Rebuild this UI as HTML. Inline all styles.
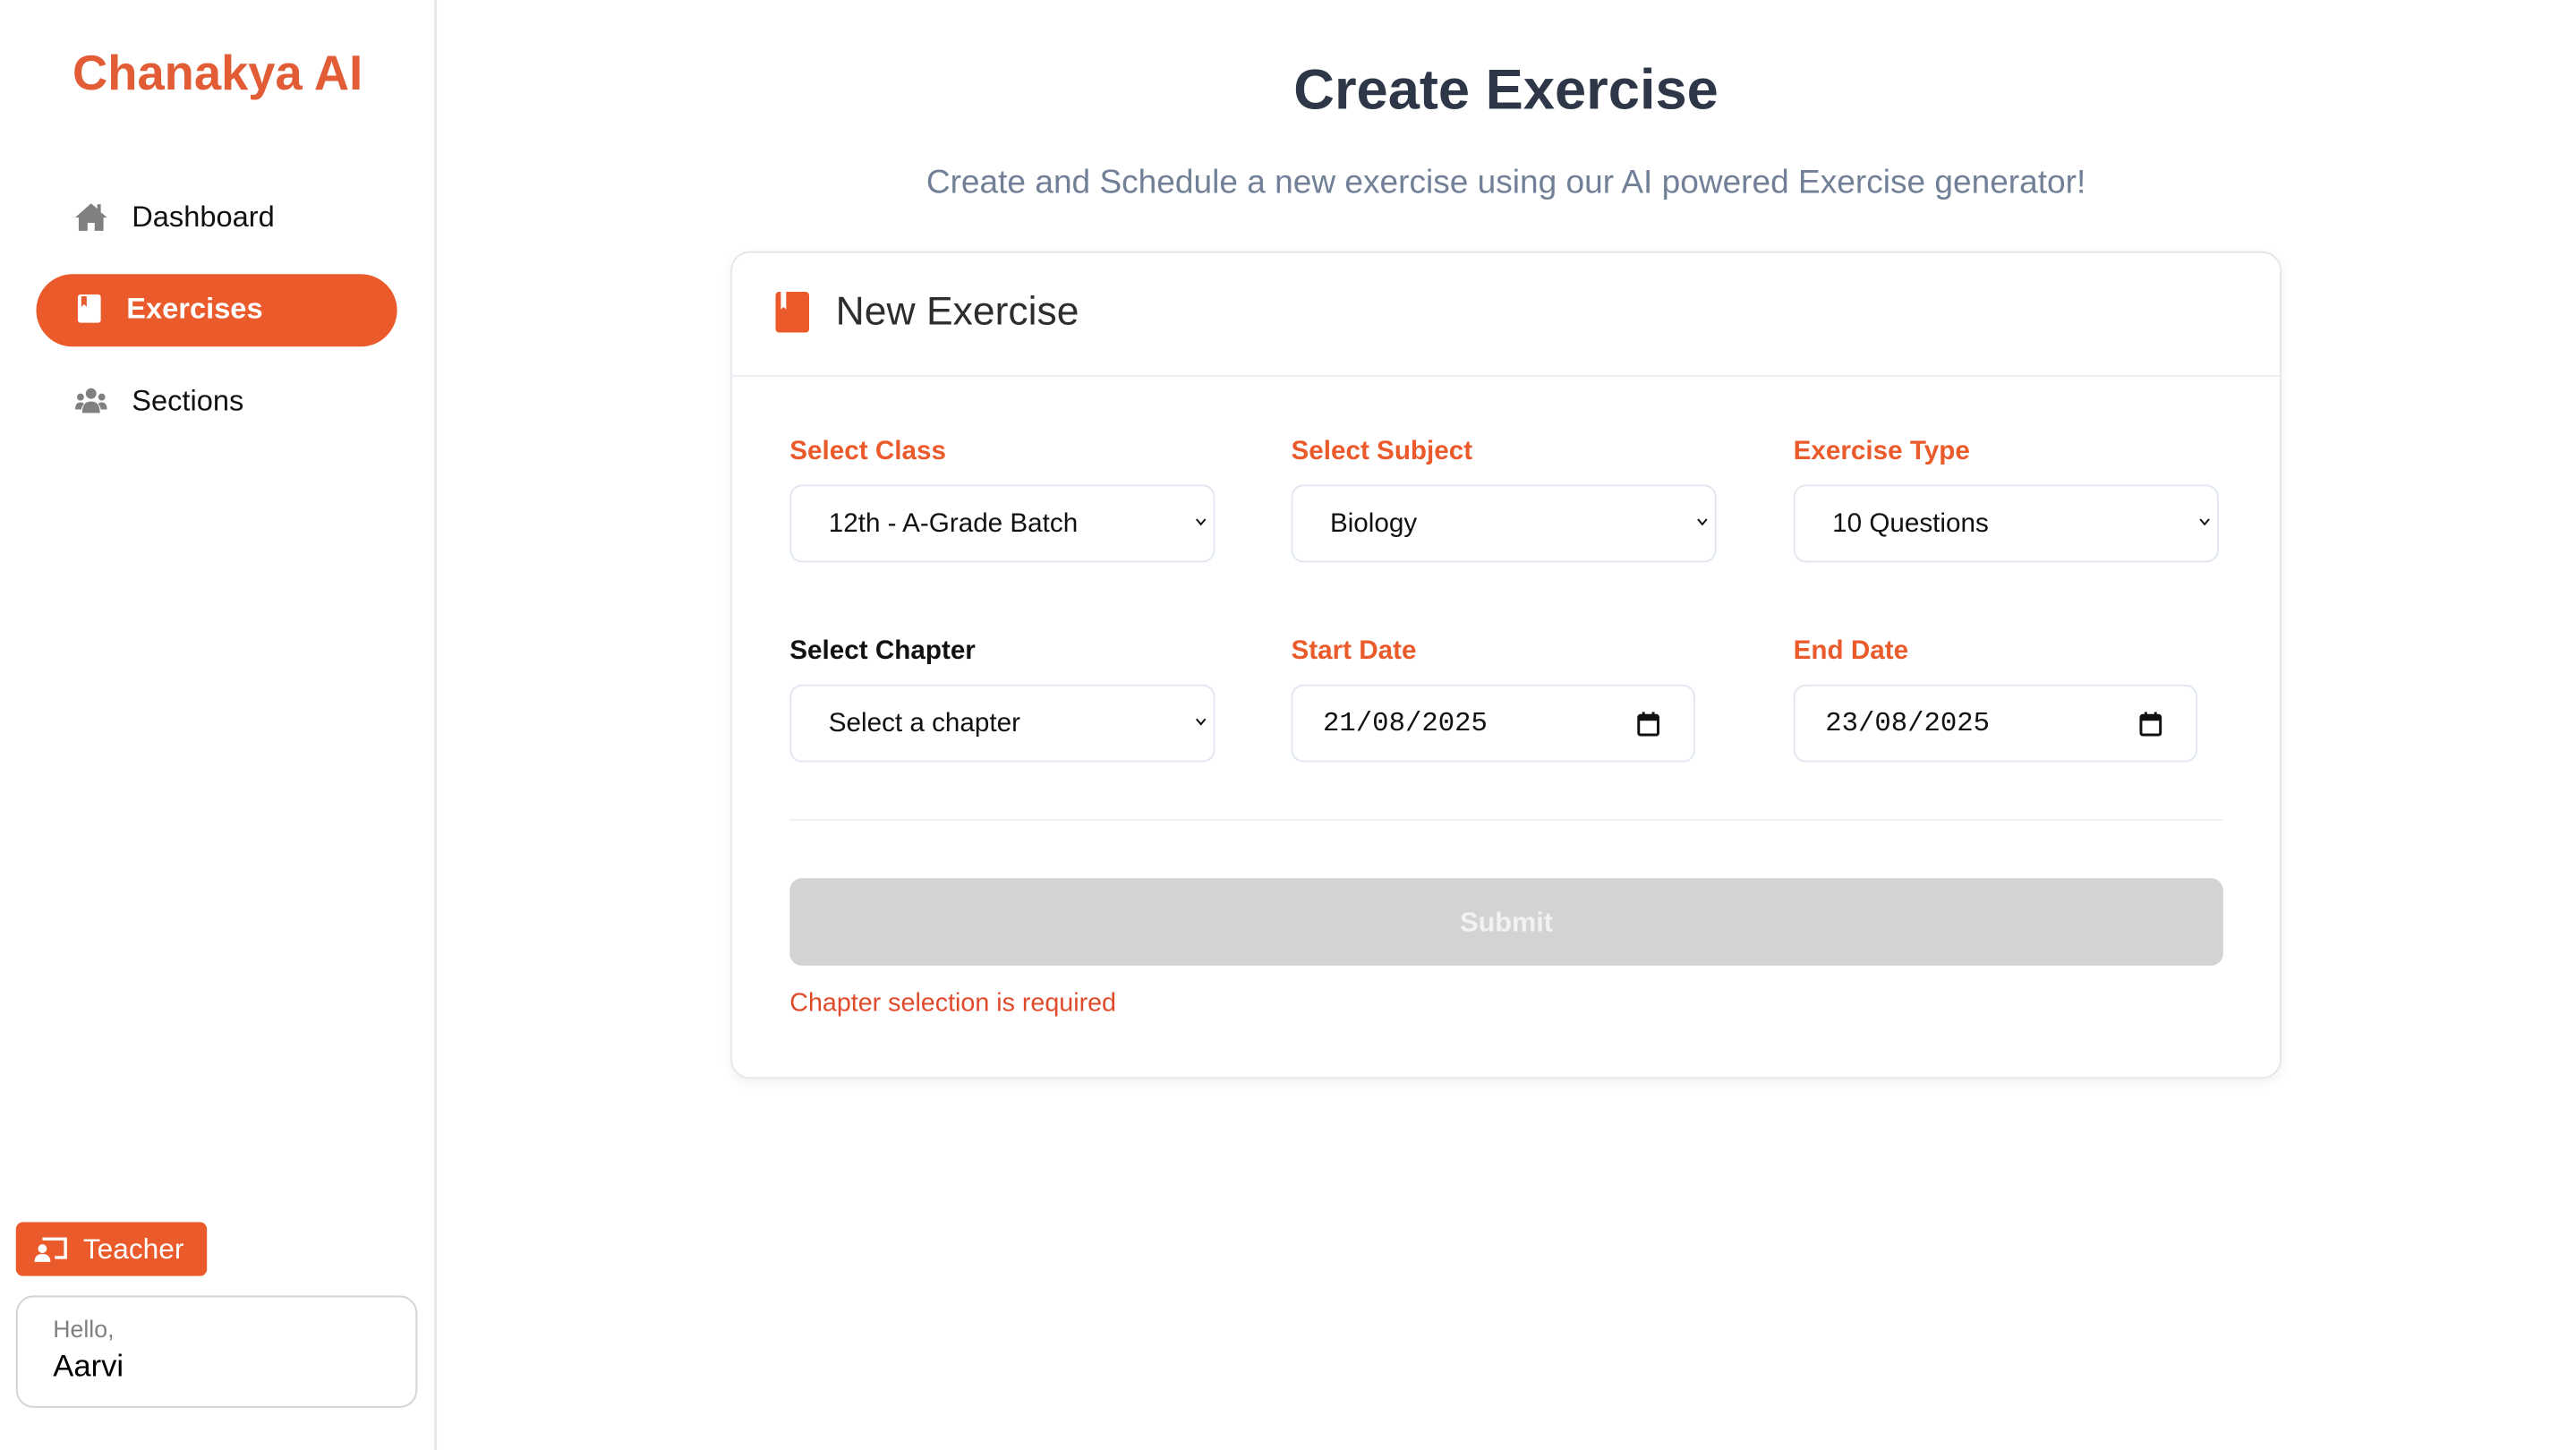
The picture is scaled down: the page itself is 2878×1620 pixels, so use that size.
<!DOCTYPE html>
<html><head><meta charset="utf-8"><style>
*{box-sizing:border-box;margin:0;padding:0}
body{width:2878px;height:1618px;background:#fff;font-family:"Liberation Sans",sans-serif;position:relative;overflow:hidden;color:#111}
#w{position:absolute;left:0;top:0;width:2913px;height:1638px;transform:scale(0.988);transform-origin:0 0}
.abs{position:absolute}
.side{left:0;top:0;width:494px;height:1640px;border-right:3px solid #e5e7eb}
.logo{left:82px;top:50px;font-size:55px;font-weight:bold;color:#e25c35;letter-spacing:0px}
.nav{left:83px;font-size:33px;display:flex;align-items:center;gap:26px}
.pill{left:41px;top:310px;width:408px;height:82px;border-radius:41px;background:#ea5a2b}
.lbl{font-size:30px;font-weight:bold;color:#ea5a2b}
.fld{height:88px;border:2px solid #e2e8f0;border-radius:14px;background:#fff;font-size:30px;display:flex;align-items:center;padding-left:42px;color:#111}
.chev{position:absolute;right:10px;top:30px}
.mono{font-family:"Liberation Mono",monospace;font-size:31px;padding-left:34px}
</style></head><body><div id="w">
<div class="abs side"></div>
<div class="abs logo">Chanakya AI</div>
<div class="abs nav" style="top:226px"><svg width="40" height="34" viewBox="0 0 40 34"><path d="M20 2 L2 18 L6 18 L6 33 L16 33 L16 24 L24 24 L24 33 L34 33 L34 18 L38 18 L31 12 L31 3 L27 3 L27 8Z" fill="#808080"/></svg><span>Dashboard</span></div>
<div class="abs pill"></div>
<div class="abs nav" style="top:330px;color:#fff;font-weight:bold"><svg width="34" height="34" viewBox="0 0 34 34"><rect x="5" y="1" width="26" height="32" rx="3" fill="#fff"/><path d="M9 3 L9 15 L12 12 L15 15 L15 3Z" fill="#ea5a2b"/></svg><span>Exercises</span></div>
<div class="abs nav" style="top:434px"><svg width="40" height="32" viewBox="0 0 40 32"><circle cx="20" cy="8" r="6" fill="#808080"/><circle cx="8" cy="12" r="4" fill="#808080"/><circle cx="32" cy="12" r="4" fill="#808080"/><path d="M10 30 Q10 17 20 17 Q30 17 30 30Z" fill="#808080"/><path d="M2 26 Q2 18 8 18 Q11 18 12 20 Q9 23 9 26Z" fill="#808080"/><path d="M38 26 Q38 18 32 18 Q29 18 28 20 Q31 23 31 26Z" fill="#808080"/></svg><span>Sections</span></div>
<div class="abs" style="left:18px;top:1382px;width:216px;height:61px;background:#ea5a2b;border-radius:8px;color:#fff;font-size:32px;display:flex;align-items:center;padding-left:20px;gap:18px"><svg width="38" height="30" viewBox="0 0 38 30"><path d="M10 3 L36 3 L36 24 L24 24" stroke="#fff" stroke-width="3.5" fill="none"/><circle cx="10" cy="14" r="5" fill="#fff"/><path d="M1 29 Q1 20 10 20 Q19 20 19 29Z" fill="#fff"/></svg><span>Teacher</span></div>
<div class="abs" style="left:18px;top:1465px;width:454px;height:127px;border:2px solid #d4d4d4;border-radius:20px"></div>
<div class="abs" style="left:60px;top:1488px;font-size:27px;color:#808080">Hello,</div>
<div class="abs" style="left:60px;top:1525px;font-size:35px;color:#000">Aarvi</div>

<div class="abs" style="left:826px;width:1754px;top:64px;text-align:center;font-size:64px;font-weight:bold;color:#2d3748">Create Exercise</div>
<div class="abs" style="left:526px;width:2354px;top:184px;text-align:center;font-size:37.5px;color:#718096">Create and Schedule a new exercise using our AI powered Exercise generator!</div>

<div class="abs" style="left:826px;top:284px;width:1754px;height:936px;border:2px solid #e5e7eb;border-radius:22px;box-shadow:0 4px 12px rgba(0,0,0,.06)"></div>
<div class="abs" style="left:828px;top:424px;width:1750px;height:2px;background:#e9edf2"></div>
<svg class="abs" style="left:877px;top:330px" width="38" height="46" viewBox="0 0 38 46"><rect x="0" y="0" width="38" height="46" rx="4" fill="#ea5a2b"/><path d="M6 0 L6 20 L9 17 L12 20 L12 0Z" fill="#fff"/></svg>
<div class="abs" style="left:945px;top:326px;font-size:45px;color:#2d2d2d">New Exercise</div>

<div class="abs lbl" style="left:893px;top:493px">Select Class</div>
<div class="abs lbl" style="left:1460px;top:493px">Select Subject</div>
<div class="abs lbl" style="left:2028px;top:493px">Exercise Type</div>
<div class="abs fld" style="left:893px;top:548px;width:481px">12th - A-Grade Batch<svg class="chev" width="20" height="20" viewBox="0 0 20 20" style="right:4px"><path d="M5 7 L10 13 L15 7" stroke="#111" stroke-width="2" fill="none"/></svg></div>
<div class="abs fld" style="left:1460px;top:548px;width:481px">Biology<svg class="chev" width="20" height="20" viewBox="0 0 20 20" style="right:4px"><path d="M5 7 L10 13 L15 7" stroke="#111" stroke-width="2" fill="none"/></svg></div>
<div class="abs fld" style="left:2028px;top:548px;width:481px">10 Questions<svg class="chev" width="20" height="20" viewBox="0 0 20 20" style="right:4px"><path d="M5 7 L10 13 L15 7" stroke="#111" stroke-width="2" fill="none"/></svg></div>

<div class="abs lbl" style="left:893px;top:719px;color:#111">Select Chapter</div>
<div class="abs lbl" style="left:1460px;top:719px">Start Date</div>
<div class="abs lbl" style="left:2028px;top:719px">End Date</div>
<div class="abs fld" style="left:893px;top:774px;width:481px">Select a chapter<svg class="chev" width="20" height="20" viewBox="0 0 20 20" style="right:4px"><path d="M5 7 L10 13 L15 7" stroke="#111" stroke-width="2" fill="none"/></svg></div>
<div class="abs fld mono" style="left:1460px;top:774px;width:457px">21/08/2025<svg class="chev" width="26" height="28" viewBox="0 0 26 28" style="right:38px;top:29px"><rect x="2" y="4" width="22" height="22" rx="2" stroke="#111" stroke-width="3" fill="none"/><rect x="2" y="4" width="22" height="6" fill="#111"/><rect x="6" y="0" width="3" height="6" fill="#111"/><rect x="17" y="0" width="3" height="6" fill="#111"/></svg></div>
<div class="abs fld mono" style="left:2028px;top:774px;width:457px">23/08/2025<svg class="chev" width="26" height="28" viewBox="0 0 26 28" style="right:38px;top:29px"><rect x="2" y="4" width="22" height="22" rx="2" stroke="#111" stroke-width="3" fill="none"/><rect x="2" y="4" width="22" height="6" fill="#111"/><rect x="6" y="0" width="3" height="6" fill="#111"/><rect x="17" y="0" width="3" height="6" fill="#111"/></svg></div>

<div class="abs" style="left:893px;top:926px;width:1621px;height:2px;background:#edf0f4"></div>
<div class="abs" style="left:893px;top:993px;width:1621px;height:99px;background:#d3d3d3;border-radius:14px;color:#f2f2f2;font-size:31px;font-weight:bold;display:flex;align-items:center;justify-content:center">Submit</div>
<div class="abs" style="left:893px;top:1118px;font-size:29px;color:#e04a2a">Chapter selection is required</div>
</div></body></html>
